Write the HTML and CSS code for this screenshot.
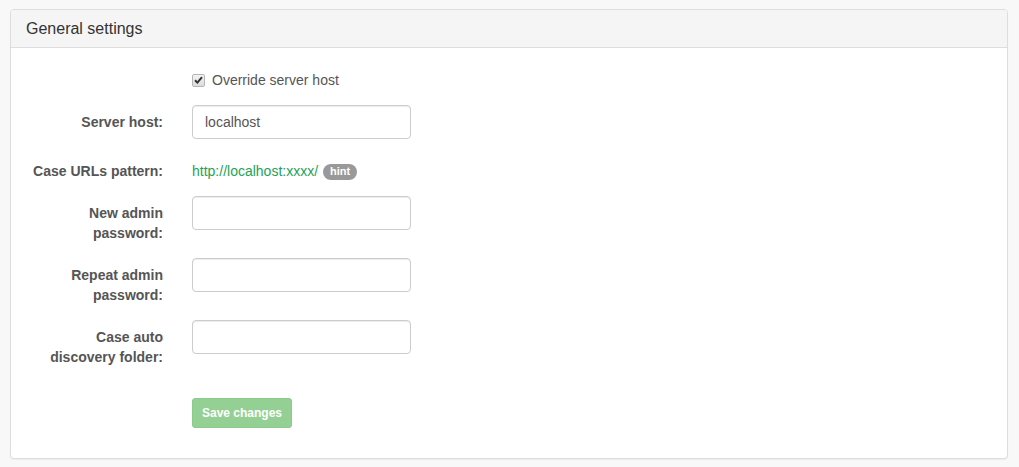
FILE: index.html
```html
<!DOCTYPE html>
<html lang="en">
<head>
    <meta charset="UTF-8" />
    <meta name="viewport" content="width=device-width, initial-scale=1.0" />
    <title>General settings</title>
    <link rel="stylesheet" href="styles.css">
</head>
<body>
    <div class="panel">
        <div class="panel-heading">General settings</div>
        <form class="panel-body">
            <div class="form-group">
                <div class="control-label"></div>
                <div class="control">
                    <label class="checkbox">
                        <span class="check-box">
                            <svg width="9" height="8" viewBox="0 0 9 8"><path d="M1 4.2 L3.4 6.6 L8 1.2" fill="none" stroke="#333" stroke-width="2"/></svg>
                        </span>
                        Override server host
                    </label>
                </div>
            </div>
            <div class="form-group">
                <label class="control-label" for="host">Server host:</label>
                <div class="control">
                    <input class="form-control" id="host" type="text" value="localhost" />
                </div>
            </div>
            <div class="form-group">
                <label class="control-label">Case URLs pattern:</label>
                <div class="control static">
                    <a class="url" href="#">http://localhost:xxxx/</a>
                    <span class="badge">hint</span>
                </div>
            </div>
            <div class="form-group">
                <label class="control-label" for="pass1">New admin password:</label>
                <div class="control">
                    <input class="form-control" id="pass1" type="password" />
                </div>
            </div>
            <div class="form-group">
                <label class="control-label" for="pass2">Repeat admin password:</label>
                <div class="control">
                    <input class="form-control" id="pass2" type="password" />
                </div>
            </div>
            <div class="form-group">
                <label class="control-label" for="folder">Case auto discovery folder:</label>
                <div class="control">
                    <input class="form-control" id="folder" type="text" />
                </div>
            </div>
            <div class="form-group actions">
                <div class="control-label"></div>
                <div class="control">
                    <button type="button" class="btn" disabled>Save changes</button>
                </div>
            </div>
        </form>
    </div>
</body>
</html>
```

FILE: styles.css
```css
body {
    margin: 0;
    padding: 9px 11px 7px 10px;
    background-color: #f8f8f8;
    font-family: "Liberation Sans", Arial, sans-serif;
    font-size: 14px;
    line-height: 20px;
    color: #333;
}

.panel {
    background: white;
    border: 1px solid #ddd;
    border-radius: 4px;
    box-shadow: 0 1px 1px rgba(0, 0, 0, 0.05);
}

.panel-heading {
    padding: 9px 15px 8px;
    font-size: 16px;
    line-height: 20px;
    background-color: #f5f5f5;
    border-bottom: 1px solid #ddd;
    border-radius: 3px 3px 0 0;
}

.panel-body {
    padding: 15px;
    margin: 0;
}

.form-group {
    display: flex;
    margin-bottom: 15px;
}

.control-label {
    width: 134px;
    margin-left: 3px;
    padding: 7px 15px 0 0;
    text-align: right;
    font-weight: bold;
    color: #555;
    flex-shrink: 0;
}

.control {
    padding-left: 14px;
}

.static {
    padding-top: 7px;
}

.checkbox {
    display: flex;
    align-items: center;
    gap: 7px;
    padding-top: 7px;
    color: #555;
}

.check-box {
    display: flex;
    align-items: center;
    justify-content: center;
    width: 11px;
    height: 11px;
    border: 1px solid #b5b5b5;
    border-radius: 2px;
    background: linear-gradient(#f4f4f4, #dcdcdc);
}

.form-control {
    display: block;
    box-sizing: border-box;
    width: 219px;
    height: 34px;
    padding: 6px 12px;
    font-family: inherit;
    font-size: 14px;
    color: #555;
    border: 1px solid #ccc;
    border-radius: 4px;
    box-shadow: inset 0 1px 1px rgba(0, 0, 0, 0.075);
}

.url {
    color: #1fa257;
    text-decoration: none;
}

.badge {
    display: inline-block;
    padding: 1px 7px 2px;
    margin-left: 1px;
    font-size: 11px;
    line-height: 13px;
    font-weight: bold;
    color: white;
    background-color: #999;
    border-radius: 10px;
    vertical-align: 1px;
}

.actions .control {
    padding-top: 16px;
}

.btn {
    display: block;
    height: 30px;
    padding: 5px 9px;
    font-family: inherit;
    font-size: 12px;
    line-height: 18px;
    font-weight: bold;
    color: white;
    background-color: #5cb85c;
    border: 1px solid #4cae4c;
    border-radius: 3px;
    opacity: 0.65;
}
```
